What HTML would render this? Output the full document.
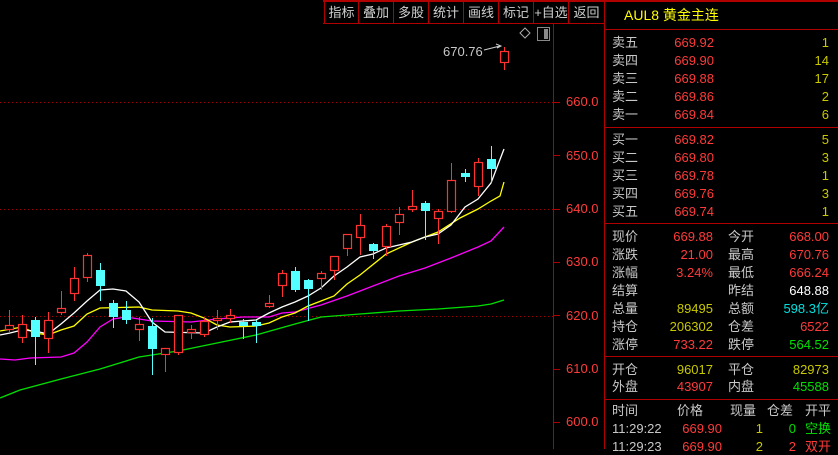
<!DOCTYPE html>
<html><head><meta charset="utf-8"><style>
*{margin:0;padding:0;box-sizing:border-box}
body{width:838px;height:449px;background:#000;overflow:hidden;position:relative;font-family:"Liberation Sans","Noto Sans CJK SC",sans-serif;font-size:13px;color:#c8c8c8}
.a{position:absolute;white-space:nowrap;line-height:16px}
.r{color:#ff3a3a}.y{color:#c8c800}.c{color:#00e0e0}.g{color:#00e000}.w{color:#fff}
.tb{position:absolute;top:3px;height:20px;line-height:20px;font-size:13px;color:#d0d0d0;text-align:center}
</style></head><body>
<svg width="838" height="449" style="position:absolute;left:0;top:0">
<rect x="323" y="0" width="515" height="2" fill="#b00000"/>
<line x1="323" y1="23.5" x2="604" y2="23.5" stroke="#b00000"/>
<g stroke="#b00000">
<line x1="324.5" y1="2" x2="324.5" y2="23"/><line x1="358.5" y1="2" x2="358.5" y2="23"/><line x1="393.5" y1="2" x2="393.5" y2="23"/><line x1="428.5" y1="2" x2="428.5" y2="23"/><line x1="463.5" y1="2" x2="463.5" y2="23"/><line x1="498.5" y1="2" x2="498.5" y2="23"/><line x1="533.5" y1="2" x2="533.5" y2="23"/><line x1="568.5" y1="2" x2="568.5" y2="23"/>
<line x1="553.5" y1="23" x2="553.5" y2="449"/>
<line x1="604.5" y1="0" x2="604.5" y2="449"/>
<line x1="605" y1="29.5" x2="838" y2="29.5"/>
<line x1="605" y1="127.5" x2="838" y2="127.5"/>
<line x1="605" y1="223.5" x2="838" y2="223.5"/>
<line x1="605" y1="356.5" x2="838" y2="356.5"/>
<line x1="605" y1="399.5" x2="838" y2="399.5"/>
</g>
<g stroke="#b00000">
<line x1="553" y1="102.5" x2="560" y2="102.5"/><line x1="553" y1="155.5" x2="560" y2="155.5"/><line x1="553" y1="209.5" x2="560" y2="209.5"/><line x1="553" y1="262.5" x2="560" y2="262.5"/><line x1="553" y1="315.5" x2="560" y2="315.5"/><line x1="553" y1="369.5" x2="560" y2="369.5"/><line x1="553" y1="422.5" x2="560" y2="422.5"/>
</g>
<g stroke="#a00000" stroke-dasharray="1 3">
<line x1="0" y1="102.5" x2="553" y2="102.5"/><line x1="0" y1="209.5" x2="553" y2="209.5"/><line x1="0" y1="316.5" x2="553" y2="316.5"/>
</g>
<path d="M520 33 l5 -5 l5 5 l-5 5z" fill="none" stroke="#aaa"/>
<rect x="537.5" y="27.5" width="12" height="13" fill="none" stroke="#888"/><rect x="544" y="29" width="4" height="10" fill="#888"/>
<path d="M484 50 L500 46 M496 44 L501 46 L497 48" stroke="#ccc" fill="none"/>
<g fill="none" stroke-width="1.3">
<polyline stroke="#00e000" points="0,398 20,390 61,379 100,369 139,357 178,351 217,343 256,335 295,324 321,317 360,314 399,311 438,309 478,306 491,304 504,300"/>
<polyline stroke="#ff00ff" points="0,359 15,360 30,358 61,357 74,353 87,342 100,327 113,319 126,317 139,319 152,321 191,322 217,319 243,317 269,317 282,313 295,312 321,305 347,296 373,286 399,276 425,268 451,258 478,247 491,241 504,227"/>
<polyline stroke="#ffff00" points="0,331 22,327 35,333 48,335 61,330 74,326 87,314 100,308 139,307 152,310 178,311 191,313 204,318 217,325 230,327 256,326 269,323 282,317 295,313 308,306 321,301 334,296 347,284 360,275 386,254 412,242 438,232 460,218 478,209 491,201 500,196 504,182"/>
<polyline stroke="#ffffff" points="0,335 10,333 22,330 35,331 48,334 61,324 74,313 87,301 100,290 113,289 126,291 139,302 152,322 165,332 204,333 217,327 230,322 256,320 269,313 282,307 295,302 308,296 321,288 334,276 347,267 360,257 373,254 386,248 399,245 412,242 425,237 438,234 451,225 465,207 478,199 491,183 504,149"/>
</g>
<g id="k"></g>
</svg>
<script>
var C=[[9,'r',325,329,310,332],[22,'r',324,337,315,343],[35,'c',320,337,317,365],[48,'r',320,338,312,353],[61,'r',308,312,291,315],[74,'r',278,293,267,301],[87,'r',255,277,253,282],[100,'c',270,286,263,301],[113,'c',303,317,300,328],[126,'c',310,320,301,324],[139,'r',324,329,317,341],[152,'c',326,349,318,375],[165,'r',348,354,348,372],[178,'r',315,352,315,355],[191,'r',329,332,325,339],[204,'r',321,334,318,337],[217,'r',318,320,310,330],[230,'r',315,318,309,323],[243,'c',322,326,319,339],[256,'c',322,326,320,343],[269,'r',303,306,295,308],[282,'r',273,285,270,297],[295,'c',271,290,267,292],[308,'c',280,289,279,321],[321,'r',273,278,271,290],[334,'r',256,270,256,280],[347,'r',234,248,234,256],[360,'r',225,237,214,255],[373,'c',244,251,243,259],[386,'r',226,246,224,256],[399,'r',214,222,207,235],[412,'r',206,209,190,212],[425,'c',203,211,201,240],[438,'r',211,218,209,244],[451,'r',180,211,163,213],[465,'c',173,177,169,182],[478,'r',162,186,158,196],[491,'c',159,169,146,183],[504,'r',51,62,47,70]];
var s='';C.forEach(function(d){var x=d[0],col=d[1]=='r'?'#ff3232':'#54ffff';
s+='<line x1="'+(x+.5)+'" y1="'+d[4]+'" x2="'+(x+.5)+'" y2="'+d[5]+'" stroke="'+col+'"/>';
if(d[1]=='r')s+='<rect x="'+(x-3.5)+'" y="'+(d[2]+.5)+'" width="8" height="'+Math.max(d[3]-d[2],1)+'" fill="#000" stroke="'+col+'" stroke-width="1.2"/>';
else s+='<rect x="'+(x-4)+'" y="'+d[2]+'" width="9" height="'+Math.max(d[3]-d[2],2)+'" fill="'+col+'"/>';});
document.getElementById('k').innerHTML=s;
</script>
<div class="tb" style="left:325px;width:33px">指标</div><div class="tb" style="left:359px;width:34px">叠加</div><div class="tb" style="left:394px;width:34px">多股</div><div class="tb" style="left:429px;width:34px">统计</div><div class="tb" style="left:464px;width:34px">画线</div><div class="tb" style="left:499px;width:34px">标记</div><div class="tb" style="left:534px;width:34px">+自选</div><div class="tb" style="left:569px;width:35px">返回</div>
<div class="a" style="left:443px;top:44px;color:#c8c8c8">670.76</div>
<div class="a r" style="left:566px;top:94px">660.0</div><div class="a r" style="left:566px;top:148px">650.0</div><div class="a r" style="left:566px;top:201px">640.0</div><div class="a r" style="left:566px;top:254px">630.0</div><div class="a r" style="left:566px;top:308px">620.0</div><div class="a r" style="left:566px;top:361px">610.0</div><div class="a r" style="left:566px;top:414px">600.0</div>
<div class="a" style="left:624px;top:7px;color:#ffff00;font-size:14px">AUL8 黄金主连</div>
<div id="p"></div>
<script>
var h='';function t(x,y,txt,cl,right){h+='<div class="a '+(cl||'')+'" style="'+(right?'right:'+(838-x):'left:'+x)+'px;top:'+(y-8)+'px">'+txt+'</div>';}
var sl=[['卖五','669.92','1'],['卖四','669.90','14'],['卖三','669.88','17'],['卖二','669.86','2'],['卖一','669.84','6']];
sl.forEach(function(r,i){var y=43+i*18;t(612,y,r[0]);t(714,y,r[1],'r',1);t(829,y,r[2],'y',1);});
var bl=[['买一','669.82','5'],['买二','669.80','3'],['买三','669.78','1'],['买四','669.76','3'],['买五','669.74','1']];
bl.forEach(function(r,i){var y=140+i*18;t(612,y,r[0]);t(714,y,r[1],'r',1);t(829,y,r[2],'y',1);});
var q=[['现价','669.88','r','今开','668.00','r'],['涨跌','21.00','r','最高','670.76','r'],['涨幅','3.24%','r','最低','666.24','r'],['结算','','','昨结','648.88','w'],['总量','89495','y','总额','598.3亿','c'],['持仓','206302','y','仓差','6522','r'],['涨停','733.22','r','跌停','564.52','g']];
q.forEach(function(r,i){var y=237+i*18;t(612,y,r[0]);t(713,y,r[1],r[2],1);t(728,y,r[3]);t(829,y,r[4],r[5],1);});
t(612,370,'开仓');t(713,370,'96017','y',1);t(728,370,'平仓');t(829,370,'82973','y',1);
t(612,387,'外盘');t(713,387,'43907','r',1);t(728,387,'内盘');t(829,387,'45588','g',1);
t(612,411,'时间');t(677,411,'价格');t(730,411,'现量');t(767,411,'仓差');t(805,411,'开平');
t(612,429,'11:29:22');t(722,429,'669.90','r',1);t(763,429,'1','y',1);t(796,429,'0','g',1);t(805,429,'空换','g');
t(612,447,'11:29:23');t(722,447,'669.90','r',1);t(763,447,'2','y',1);t(796,447,'2','r',1);t(805,447,'双开','r');
document.getElementById('p').innerHTML=h;
</script>
</body></html>
